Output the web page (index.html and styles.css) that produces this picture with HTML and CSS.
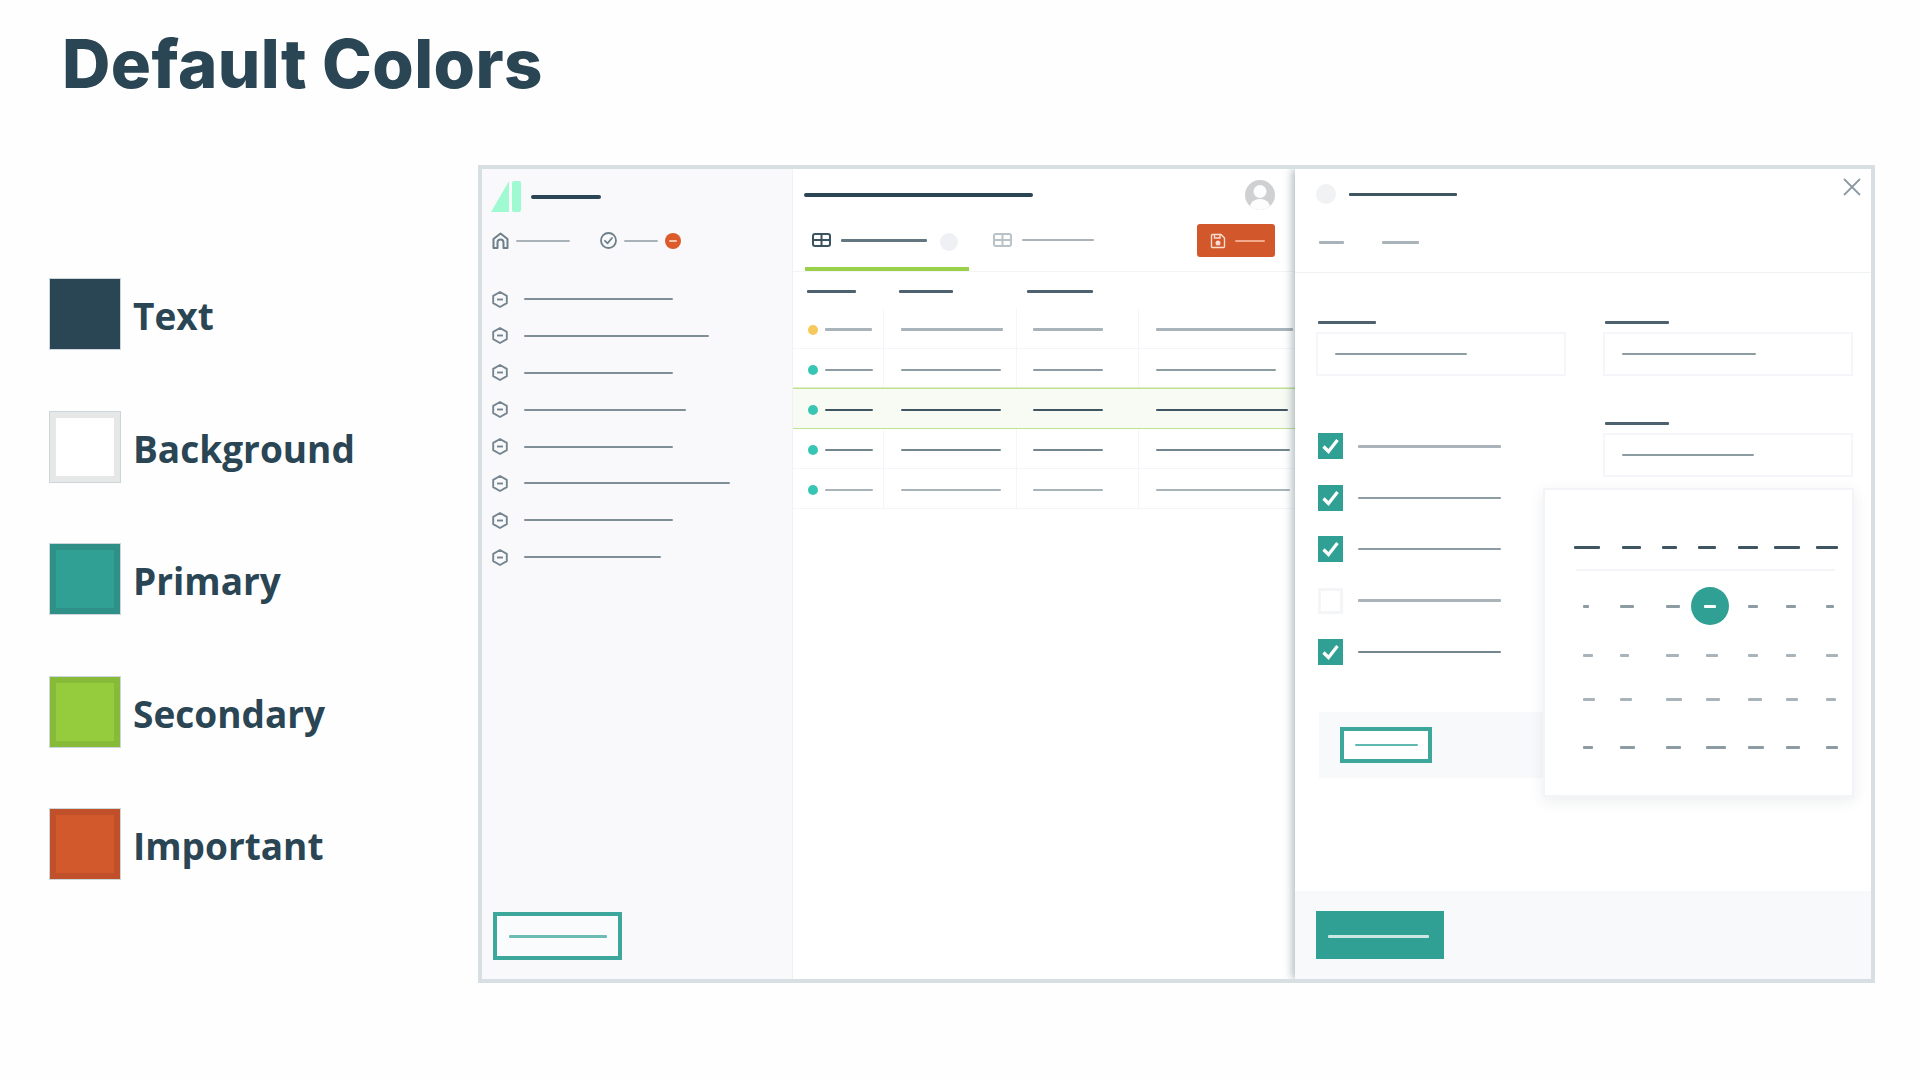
FILE: index.html
```html
<!DOCTYPE html>
<html lang="en">
<head>
<meta charset="utf-8">
<title>Default Colors</title>
<link rel="stylesheet" href="styles.css">
</head>
<body>
<div class="page">
  <header class="page-head"><h1>Default Colors</h1></header>
  <div class="content">
    <ul class="legend">
      <li class="legend-row"><span class="swatch sw-text"></span><span class="legend-label">Text</span></li>
      <li class="legend-row"><span class="swatch sw-bg"></span><span class="legend-label">Background</span></li>
      <li class="legend-row"><span class="swatch sw-primary"></span><span class="legend-label">Primary</span></li>
      <li class="legend-row"><span class="swatch sw-secondary"></span><span class="legend-label">Secondary</span></li>
      <li class="legend-row"><span class="swatch sw-important"></span><span class="legend-label">Important</span></li>
    </ul>

    <section class="frame">
      <aside class="sidebar">
        <div class="brand">
          <svg class="logo" viewBox="0 0 30 31"><path d="M0 31 18 0V31Z" fill="#9ffad2"/><rect x="21" y="0" width="9" height="31" rx="2" fill="#9ffad2"/></svg>
          <span class="ln w70 h4 c-ink"></span>
        </div>
        <div class="side-nav">
          <svg class="ic17" viewBox="0 0 17 17" fill="none" stroke="#6d7f89" stroke-width="2"><path d="M1.500 16V7L8.500 1.500 15.500 7V16H11.500V10.500A3 3 0 0 0 5.500 10.500V16Z" stroke-linejoin="round"/></svg>
          <span class="ln w54 c-l"></span>
          <svg class="ic17 nav-gap" viewBox="0 0 17 17" fill="none" stroke="#6d7f89" stroke-width="1.800"><circle cx="8.500" cy="8.500" r="7.500"/><path d="M5 8.800 7.600 11.300 12 6" stroke-linecap="round" stroke-linejoin="round"/></svg>
          <span class="ln w34 c-l"></span>
          <span class="stop"><span class="ln w8 c-stop"></span></span>
        </div>
        <ul class="side-list">
          <li class="side-item"><svg class="hex" viewBox="0 0 16 17" fill="none" stroke="#74858f" stroke-width="1.900"><path d="M8 1 14.800 4.800V12.200L8 16 1.200 12.200V4.800Z" stroke-linejoin="round"/><path d="M5 8.500H11"/></svg><span class="ln w149 c-m"></span></li>
          <li class="side-item"><svg class="hex" viewBox="0 0 16 17" fill="none" stroke="#74858f" stroke-width="1.900"><path d="M8 1 14.800 4.800V12.200L8 16 1.200 12.200V4.800Z" stroke-linejoin="round"/><path d="M5 8.500H11"/></svg><span class="ln w185 c-m"></span></li>
          <li class="side-item"><svg class="hex" viewBox="0 0 16 17" fill="none" stroke="#74858f" stroke-width="1.900"><path d="M8 1 14.800 4.800V12.200L8 16 1.200 12.200V4.800Z" stroke-linejoin="round"/><path d="M5 8.500H11"/></svg><span class="ln w149 c-m"></span></li>
          <li class="side-item"><svg class="hex" viewBox="0 0 16 17" fill="none" stroke="#74858f" stroke-width="1.900"><path d="M8 1 14.800 4.800V12.200L8 16 1.200 12.200V4.800Z" stroke-linejoin="round"/><path d="M5 8.500H11"/></svg><span class="ln w162 c-m"></span></li>
          <li class="side-item"><svg class="hex" viewBox="0 0 16 17" fill="none" stroke="#74858f" stroke-width="1.900"><path d="M8 1 14.800 4.800V12.200L8 16 1.200 12.200V4.800Z" stroke-linejoin="round"/><path d="M5 8.500H11"/></svg><span class="ln w149 c-m"></span></li>
          <li class="side-item"><svg class="hex" viewBox="0 0 16 17" fill="none" stroke="#74858f" stroke-width="1.900"><path d="M8 1 14.800 4.800V12.200L8 16 1.200 12.200V4.800Z" stroke-linejoin="round"/><path d="M5 8.500H11"/></svg><span class="ln w206 c-m"></span></li>
          <li class="side-item"><svg class="hex" viewBox="0 0 16 17" fill="none" stroke="#74858f" stroke-width="1.900"><path d="M8 1 14.800 4.800V12.200L8 16 1.200 12.200V4.800Z" stroke-linejoin="round"/><path d="M5 8.500H11"/></svg><span class="ln w149 c-m"></span></li>
          <li class="side-item"><svg class="hex" viewBox="0 0 16 17" fill="none" stroke="#74858f" stroke-width="1.900"><path d="M8 1 14.800 4.800V12.200L8 16 1.200 12.200V4.800Z" stroke-linejoin="round"/><path d="M5 8.500H11"/></svg><span class="ln w137 c-m"></span></li>
        </ul>
        <div class="btn-outline side-btn"><span class="ln w98 h3 c-teal"></span></div>
      </aside>

      <main class="main">
        <div class="main-head">
          <div class="main-title">
            <span class="ln w229 h4 c-ink"></span>
            <svg class="avatar" viewBox="0 0 30 30"><defs><clipPath id="av"><circle cx="15" cy="15" r="15"/></clipPath></defs><circle cx="15" cy="15" r="15" fill="#cfd0d2"/><g clip-path="url(#av)" fill="#fdfdfd"><circle cx="15" cy="11.500" r="6.500"/><ellipse cx="15" cy="27" rx="10" ry="8"/></g></svg>
          </div>
          <div class="tabs">
            <div class="tab tab-active">
              <svg class="grid-ic" viewBox="0 0 19 14"><rect x="1" y="1" width="17" height="12" rx="2" fill="none" stroke="#3b5360" stroke-width="2"/><path d="M1 7H18M9.500 1V13" stroke="#3b5360" stroke-width="2"/></svg>
              <span class="ln w86 h3 c-tab tab-line"></span>
              <span class="tab-dot"></span>
            </div>
            <div class="tab tab-idle">
              <svg class="grid-ic" viewBox="0 0 19 14"><rect x="1" y="1" width="17" height="12" rx="2" fill="none" stroke="#b9c2c7" stroke-width="2"/><path d="M1 7H18M9.500 1V13" stroke="#b9c2c7" stroke-width="2"/></svg>
              <span class="ln w72 c-l tab-line"></span>
            </div>
            <div class="save-btn">
              <svg class="save-ic" viewBox="0 0 16 16" fill="none" stroke="#f8ddd0" stroke-width="1.400"><path d="M1.500 2.500A1 1 0 0 1 2.500 1.500H11L14.500 5V13.500A1 1 0 0 1 13.500 14.500H2.500A1 1 0 0 1 1.500 13.500Z"/><path d="M4.500 1.500V5H10V1.500"/><circle cx="8" cy="10" r="1.800" fill="#f8ddd0"/></svg>
              <span class="ln w30 c-save"></span>
            </div>
          </div>
        </div>
        <div class="t-head">
          <div class="th-a"><span class="ln w49 h3 c-h"></span></div>
          <div class="th-b"><span class="ln w54 h3 c-h"></span></div>
          <div class="th-c"><span class="ln w66 h3 c-h"></span></div>
          <div></div>
        </div>
        <div class="t-row">
          <div class="cell cell-a"><span class="dot dot-y"></span><span class="ln w47 h3 c-r1"></span></div>
          <div class="cell cell-b"><span class="ln w102 h3 c-r1"></span></div>
          <div class="cell cell-c"><span class="ln w70 h3 c-r1"></span></div>
          <div class="cell cell-d"><span class="ln w137 h3 c-r1"></span></div>
        </div>
        <div class="t-row">
          <div class="cell cell-a"><span class="dot dot-t"></span><span class="ln w48 c-r2"></span></div>
          <div class="cell cell-b"><span class="ln w100 c-r2"></span></div>
          <div class="cell cell-c"><span class="ln w70 c-r2"></span></div>
          <div class="cell cell-d"><span class="ln w120 c-r2"></span></div>
        </div>
        <div class="t-row t-row-on">
          <div class="cell cell-a"><span class="dot dot-t"></span><span class="ln w48 c-d"></span></div>
          <div class="cell cell-b"><span class="ln w100 c-d"></span></div>
          <div class="cell cell-c"><span class="ln w70 c-d"></span></div>
          <div class="cell cell-d"><span class="ln w132 c-d"></span></div>
        </div>
        <div class="t-row">
          <div class="cell cell-a"><span class="dot dot-t"></span><span class="ln w48 c-r4"></span></div>
          <div class="cell cell-b"><span class="ln w100 c-r4"></span></div>
          <div class="cell cell-c"><span class="ln w70 c-r4"></span></div>
          <div class="cell cell-d"><span class="ln w134 c-r4"></span></div>
        </div>
        <div class="t-row">
          <div class="cell cell-a"><span class="dot dot-t"></span><span class="ln w48 c-r1"></span></div>
          <div class="cell cell-b"><span class="ln w100 c-r1"></span></div>
          <div class="cell cell-c"><span class="ln w70 c-r1"></span></div>
          <div class="cell cell-d"><span class="ln w134 c-r1"></span></div>
        </div>
      </main>

      <section class="drawer">
        <div class="dr-head">
          <div class="dr-title">
            <span class="dr-dot"></span>
            <span class="ln w108 h3 c-d"></span>
            <svg class="close" viewBox="0 0 18 18" fill="none" stroke="#8d9aa2" stroke-width="1.800"><path d="M1 1 17 17M17 1 1 17"/></svg>
          </div>
          <div class="dr-tabs"><span class="ln w25 h3 c-l"></span><span class="ln w37 h3 c-l"></span></div>
        </div>
        <div class="dr-body">
          <div class="col">
            <span class="ln w58 h3 c-h field-label"></span>
            <div class="input"><span class="ln w132 c-r2"></span></div>
            <ul class="checks">
              <li class="check-row"><svg class="cb" viewBox="0 0 25 26"><rect width="25" height="26" fill="#30a095"/><path d="M5.500 13.500 10.500 18.500 19.500 7" fill="none" stroke="#fff" stroke-width="3.200"/></svg><span class="ln w143 h3 c-l"></span></li>
              <li class="check-row"><svg class="cb" viewBox="0 0 25 26"><rect width="25" height="26" fill="#30a095"/><path d="M5.500 13.500 10.500 18.500 19.500 7" fill="none" stroke="#fff" stroke-width="3.200"/></svg><span class="ln w143 c-r2"></span></li>
              <li class="check-row"><svg class="cb" viewBox="0 0 25 26"><rect width="25" height="26" fill="#30a095"/><path d="M5.500 13.500 10.500 18.500 19.500 7" fill="none" stroke="#fff" stroke-width="3.200"/></svg><span class="ln w143 c-r2"></span></li>
              <li class="check-row"><span class="cb cb-off"></span><span class="ln w143 h3 c-l"></span></li>
              <li class="check-row"><svg class="cb" viewBox="0 0 25 26"><rect width="25" height="26" fill="#30a095"/><path d="M5.500 13.500 10.500 18.500 19.500 7" fill="none" stroke="#fff" stroke-width="3.200"/></svg><span class="ln w143 c-r4"></span></li>
            </ul>
            <div class="band"><div class="btn-outline band-btn"><span class="ln w63 c-teal2"></span></div></div>
          </div>
          <div class="col">
            <span class="ln w64 h3 c-h field-label"></span>
            <div class="input"><span class="ln w134 c-r2"></span></div>
            <span class="ln w64 h3 c-h field-label field-label-2"></span>
            <div class="input"><span class="ln w132 c-r2"></span></div>
          </div>
          <div class="cal">
            <div class="cal-head">
              <span class="ln w26 h3 c-d"></span><span class="ln w19 h3 c-d"></span><span class="ln w15 h3 c-d"></span><span class="ln w18 h3 c-d"></span><span class="ln w20 h3 c-d"></span><span class="ln w26 h3 c-d"></span><span class="ln w22 h3 c-d"></span>
            </div>
            <div class="cal-rule"></div>
            <div class="cal-row">
              <span class="ln w6 h3 c-r2"></span><span class="ln w14 h3 c-r2"></span><span class="ln w14 h3 c-r2"></span><span class="today"><span class="ln w12 h3 c-white"></span></span><span class="ln w10 h3 c-r2"></span><span class="ln w10 h3 c-r2"></span><span class="ln w8 h3 c-r2"></span>
            </div>
            <div class="cal-row cal-gap-a">
              <span class="ln w10 h3 c-r1"></span><span class="ln w9 h3 c-r1"></span><span class="ln w13 h3 c-r1"></span><span class="ln w12 h3 c-r1"></span><span class="ln w10 h3 c-r1"></span><span class="ln w10 h3 c-r1"></span><span class="ln w12 h3 c-r1"></span>
            </div>
            <div class="cal-row cal-gap-b">
              <span class="ln w12 h3 c-r1"></span><span class="ln w12 h3 c-r1"></span><span class="ln w16 h3 c-r1"></span><span class="ln w14 h3 c-r1"></span><span class="ln w14 h3 c-r1"></span><span class="ln w12 h3 c-r1"></span><span class="ln w10 h3 c-r1"></span>
            </div>
            <div class="cal-row cal-gap-c">
              <span class="ln w10 h3 c-r2"></span><span class="ln w15 h3 c-r2"></span><span class="ln w15 h3 c-r2"></span><span class="ln w20 h3 c-r2"></span><span class="ln w16 h3 c-r2"></span><span class="ln w14 h3 c-r2"></span><span class="ln w12 h3 c-r2"></span>
            </div>
          </div>
        </div>
        <div class="dr-foot"><div class="btn-fill"><span class="ln w101 h3 c-pale"></span></div></div>
      </section>
    </section>
  </div>
</div>
</body>
</html>
```
FILE: styles.css
```css
* { box-sizing: border-box; }
html, body { margin: 0; padding: 0; background: #fefefe; }
ul { list-style: none; margin: 0; padding: 0; }

.page { width: 1920px; height: 1080px; overflow: hidden; color: #2a4553; }
.page-head { height: 165px; padding: 27px 0 0 62px; }
h1 { margin: 0; font: 800 67px/1.1 Inter, Lato, "Liberation Sans", sans-serif; color: #2a4553; letter-spacing: .4px; }

.content { display: flex; }
.legend { width: 478px; padding: 113px 0 0 49px; display: flex; flex-direction: column; gap: 60.5px; }
.legend-row { display: flex; align-items: center; gap: 12px; height: 72px; }
.legend-label { font: 700 37px/72px "Open Sans", "Noto Sans", sans-serif; padding-top: 4px; }
.swatch { width: 72px; height: 72px; display: block; border: 7px solid; outline: 1px solid #cdd6da; outline-offset: -1px; }
.sw-text { background: #2a4553; border-color: #2a4553; }
.sw-bg { background: #fff; border-color: #e6e8e8; }
.sw-primary { background: #30a095; border-color: #2f9088; }
.sw-secondary { background: #95cc3d; border-color: #86ba38; }
.sw-important { background: #d2592b; border-color: #bf502a; }

/* mock application */
.frame { width: 1397px; height: 818px; border: 4px solid #d8dfe3; display: flex; background: #fff; filter: blur(.4px); }

.ln { display: block; flex: none; height: 2px; border-radius: 1px; }
.h3 { height: 3px; }
.h4 { height: 4px; border-radius: 2px; }
.c-ink { background: #2a4553; }
.c-d { background: #3f5662; }
.c-tab { background: #63757f; }
.c-h { background: #4d626e; }
.c-m { background: #7f8e97; }
.c-l { background: #a9b3b9; }
.c-r1 { background: #a9b3ba; }
.c-r2 { background: #8d9ba3; }
.c-r4 { background: #73858f; }
.c-teal { background: #6dbcb4; }
.c-teal2 { background: #5fb9b0; }
.c-stop { background: #f6c3ae; }
.c-save { background: #f3a98d; }
.c-white { background: #fff; }
.c-pale { background: #c9e8e3; }

.w6 { width: 6px; } .w8 { width: 8px; } .w9 { width: 9px; } .w10 { width: 10px; } .w12 { width: 12px; }
.w13 { width: 13px; } .w14 { width: 14px; } .w15 { width: 15px; } .w16 { width: 16px; } .w18 { width: 18px; }
.w19 { width: 19px; } .w20 { width: 20px; } .w22 { width: 22px; } .w25 { width: 25px; } .w26 { width: 26px; }
.w30 { width: 30px; } .w34 { width: 34px; } .w37 { width: 37px; } .w47 { width: 47px; } .w48 { width: 48px; }
.w49 { width: 49px; } .w54 { width: 54px; } .w58 { width: 58px; } .w63 { width: 63px; } .w64 { width: 64px; }
.w66 { width: 66px; } .w70 { width: 70px; } .w72 { width: 72px; } .w86 { width: 86px; } .w98 { width: 98px; }
.w100 { width: 100px; } .w101 { width: 101px; } .w102 { width: 102px; } .w108 { width: 108px; } .w120 { width: 120px; }
.w132 { width: 132px; } .w134 { width: 134px; } .w137 { width: 137px; } .w143 { width: 143px; } .w149 { width: 149px; }
.w162 { width: 162px; } .w185 { width: 185px; } .w206 { width: 206px; } .w229 { width: 229px; }

/* sidebar */
.sidebar { width: 311px; flex: none; background: #f9f9fc; border-right: 1px solid #f0f1f4; display: flex; flex-direction: column; }
.brand { display: flex; align-items: center; gap: 10px; padding: 12px 0 0 9px; }
.logo { width: 30px; height: 31px; display: block; }
.side-nav { display: flex; align-items: center; gap: 7px; margin-top: 20px; padding-left: 10px; height: 17px; }
.ic17 { width: 17px; height: 17px; display: block; flex: none; }
.nav-gap { margin-left: 23px; }
.stop { width: 16px; height: 16px; border-radius: 50%; background: #dd5a2b; display: flex; align-items: center; justify-content: center; }
.side-list { margin-top: 42px; padding-left: 10px; display: flex; flex-direction: column; gap: 20.9px; }
.side-item { display: flex; align-items: center; gap: 16px; height: 16px; }
.hex { width: 16px; height: 17px; display: block; flex: none; }
.btn-outline { border: 4px solid #3da79c; display: flex; align-items: center; justify-content: center; background: #fff; }
.side-btn { width: 129px; height: 48px; margin: auto 0 19px 11px; background: #fafbfc; }

/* main */
.main { width: 502px; flex: none; display: flex; flex-direction: column; overflow: hidden; }
.main-head { height: 103px; border-bottom: 1px solid #f3f4f6; padding-top: 11px; }
.main-title { display: flex; align-items: center; justify-content: space-between; padding: 0 20px 0 11px; height: 30px; }
.avatar { width: 30px; height: 30px; display: block; }
.tabs { display: flex; margin-top: 14px; padding: 0 20px 0 12px; }
.tab { display: flex; align-items: flex-start; height: 47px; padding-top: 9px; }
.tab-active { width: 164px; padding-left: 7px; border-bottom: 4px solid #9bd04a; }
.tab-idle { margin-left: 24px; }
.grid-ic { width: 19px; height: 14px; display: block; flex: none; }
.tab-line { margin: 6px 0 0 10px; }
.tab-dot { width: 18px; height: 18px; border-radius: 50%; background: #eff0f3; margin-left: 13px; flex: none; }
.save-btn { margin-left: auto; width: 78px; height: 33px; background: #d2582b; border-radius: 3px; display: flex; align-items: center; gap: 9px; padding-left: 13px; }
.save-ic { width: 16px; height: 16px; display: block; }

.t-head, .t-row { display: grid; grid-template-columns: 91px 133px 122px 156px; }
.t-head { height: 37px; align-items: center; padding-top: 2px; }
.th-a { padding-left: 14px; }
.th-b { padding-left: 15px; }
.th-c { padding-left: 10px; }
.t-row { height: 40px; border-bottom: 1.5px solid #f4f5f8; }
.t-row-on { background: #f8fbf4; border-bottom: 1.5px solid #bfe290; box-shadow: 0 -1.5px 0 #bfe290; }
.cell { display: flex; align-items: center; padding-top: 2px; border-right: 1.5px solid #f4f5f8; }
.t-row-on .cell { border-right-color: transparent; }
.cell-a { padding-left: 15px; gap: 7px; }
.cell-b { padding-left: 17px; }
.cell-c { padding-left: 16px; }
.cell-d { padding-left: 17px; border-right: 0; }
.dot { width: 10px; height: 10px; border-radius: 50%; flex: none; }
.dot-y { background: #f7c85b; }
.dot-t { background: #39c5b4; }

/* drawer */
.drawer { width: 576px; flex: none; position: relative; background: #fff; box-shadow: -3px 0 8px rgba(60, 85, 100, .38); clip-path: inset(0 0 0 -16px); display: flex; flex-direction: column; }
.dr-head { height: 104px; border-bottom: 1px solid #f0f1f3; }
.dr-title { display: flex; align-items: center; gap: 13px; height: 20px; margin-top: 15px; padding: 0 10px 0 21px; }
.dr-dot { width: 20px; height: 20px; border-radius: 50%; background: #f1f2f4; }
.close { width: 18px; height: 18px; margin-left: auto; align-self: flex-start; margin-top: -6px; display: block; }
.dr-tabs { display: flex; gap: 38px; margin-top: 37px; padding-left: 24px; }
.dr-body { display: flex; gap: 37px; padding-left: 21px; flex: 1; position: relative; }
.col { width: 250px; flex: none; display: flex; flex-direction: column; align-items: flex-start; }
.field-label { margin: 48px 0 8px 2px; }
.field-label-2 { margin-top: 46px; }
.input { width: 250px; height: 44px; border: 2px solid #f5f6f9; display: flex; align-items: center; padding-left: 17px; }
.checks { margin-top: 57px; margin-left: 2px; display: flex; flex-direction: column; gap: 25.5px; }
.check-row { display: flex; align-items: center; gap: 15px; height: 26px; }
.cb { width: 25px; height: 26px; display: block; flex: none; }
.cb-off { border: 3px solid #f4f5f7; background: #fff; }
.band { width: 226px; height: 66px; margin: 47px 0 0 3px; background: #f8f9fb; padding: 15px 0 0 21px; }
.band-btn { width: 92px; height: 36px; }

.cal { position: absolute; top: 215px; left: 248px; width: 311px; height: 309px; background: #fff; border: 2px solid #f3f4f7; box-shadow: 0 4px 14px rgba(40, 60, 80, .09); padding-top: 56px; }
.cal-head { display: grid; grid-template-columns: 48px 40px 36px 40px 36px 42px 22px; padding-left: 29px; }
.cal-rule { height: 2px; width: 259px; margin: 20px 0 16px 31px; background: #f3f4f8; }
.cal-row { display: grid; grid-template-columns: 37px 46px 40px 42px 38px 40px 12px; padding-left: 38px; height: 38px; align-items: center; }
.today { width: 38px; height: 38px; margin-left: -15px; border-radius: 50%; background: #30a095; display: flex; align-items: center; justify-content: center; }
.cal-gap-a { margin-top: 11px; }
.cal-gap-b { margin-top: 6px; }
.cal-gap-c { margin-top: 10px; }

.dr-foot { height: 88px; background: #f8f9fb; padding: 20px 0 0 21px; }
.btn-fill { width: 128px; height: 48px; background: #30a095; padding: 2px 0 0 12px; display: flex; align-items: center; }
```
